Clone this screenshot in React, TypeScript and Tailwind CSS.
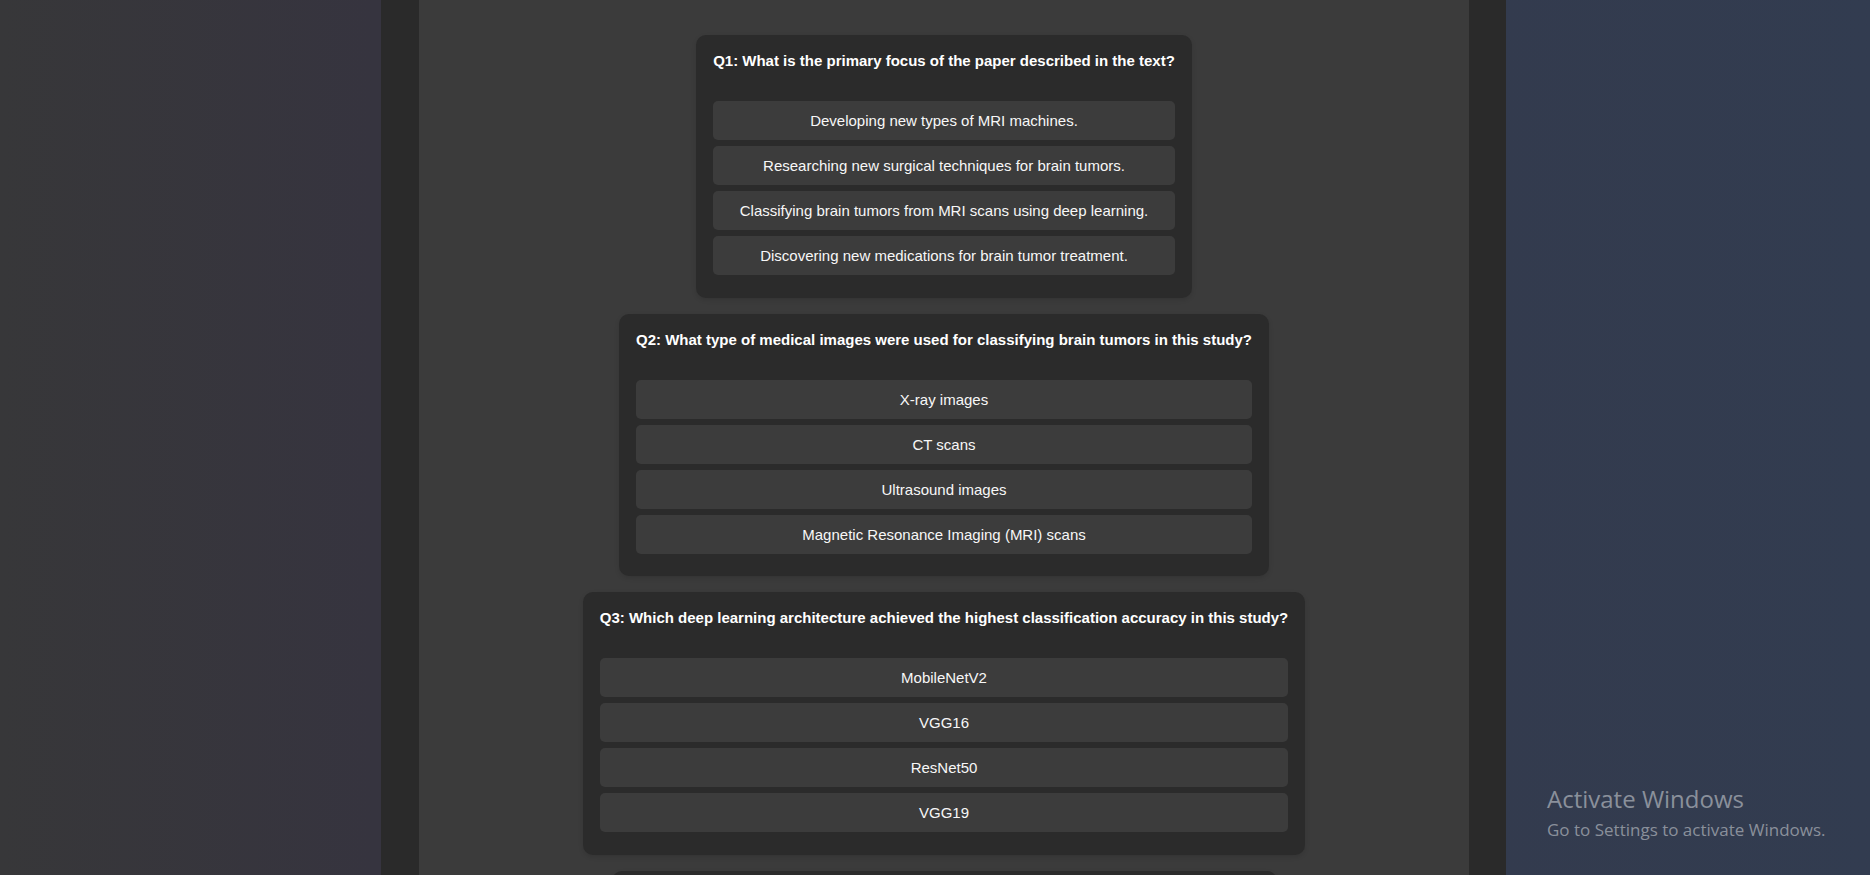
import React from "react";

type Q = { q: string; options: string[]; width?: string };

const questions: Q[] = [
  {
    q: "Q1: What is the primary focus of the paper described in the text?",
    options: [
      "Developing new types of MRI machines.",
      "Researching new surgical techniques for brain tumors.",
      "Classifying brain tumors from MRI scans using deep learning.",
      "Discovering new medications for brain tumor treatment.",
    ],
  },
  {
    q: "Q2: What type of medical images were used for classifying brain tumors in this study?",
    options: [
      "X-ray images",
      "CT scans",
      "Ultrasound images",
      "Magnetic Resonance Imaging (MRI) scans",
    ],
  },
  {
    q: "Q3: Which deep learning architecture achieved the highest classification accuracy in this study?",
    options: ["MobileNetV2", "VGG16", "ResNet50", "VGG19"],
  },
  {
    q: "Q4: What technique was used to improve the performance of the pre-trained models?",
    options: ["Transfer learning", "Random forests", "Manual feature extraction", "K-means clustering"],
    width: "q4",
  },
];

function Card({ item }: { item: Q }) {
  return (
    <div
      className={
        item.width === "q4"
          ? "w-[665px] shrink-0 rounded-[10px] bg-[#2b2b2b] px-[17px] pt-[16px] pb-[22.5px] shadow-[0_2px_5px_rgba(0,0,0,0.12)]"
          : "w-fit shrink-0 rounded-[10px] bg-[#2b2b2b] px-[17px] pt-[16px] pb-[22.5px] shadow-[0_2px_5px_rgba(0,0,0,0.12)]"
      }
    >
      <div className="whitespace-nowrap text-[15px] font-bold leading-[19px] text-white">{item.q}</div>
      <div className="mt-[31px] flex flex-col gap-[6px]">
        {item.options.map((o) => (
          <div
            key={o}
            className="flex h-[39px] items-center justify-center rounded-[5px] bg-[#3c3c3c] text-[15px] leading-[17px] text-[#f7f7f7]"
          >
            {o}
          </div>
        ))}
      </div>
    </div>
  );
}

export default function App() {
  return (
    <div className="relative h-[875px] w-full overflow-hidden bg-[linear-gradient(90deg,#373739_0%,#36343f_20%,#343848_55%,#333b4e_80%,#323c50_100%)] font-['Liberation_Sans',Arial,sans-serif]">
      <div className="ml-[381px] h-full w-[1125px] bg-[#2a2a2a] pl-[38px] pr-[37px]">
        <div className="flex h-full flex-col items-center gap-[16px] bg-[#3b3b3b] pt-[35px]">
          {questions.map((item) => (
            <Card key={item.q} item={item} />
          ))}
        </div>
      </div>
      <div className="pointer-events-none absolute left-[1547px] top-[784px] font-['Open_Sans','Noto_Sans',sans-serif] text-[#8a909b]">
        <div className="text-[24px] leading-[30px]">Activate Windows</div>
        <div className="mt-[4px] text-[17px] leading-[24px]">Go to Settings to activate Windows.</div>
      </div>
    </div>
  );
}
